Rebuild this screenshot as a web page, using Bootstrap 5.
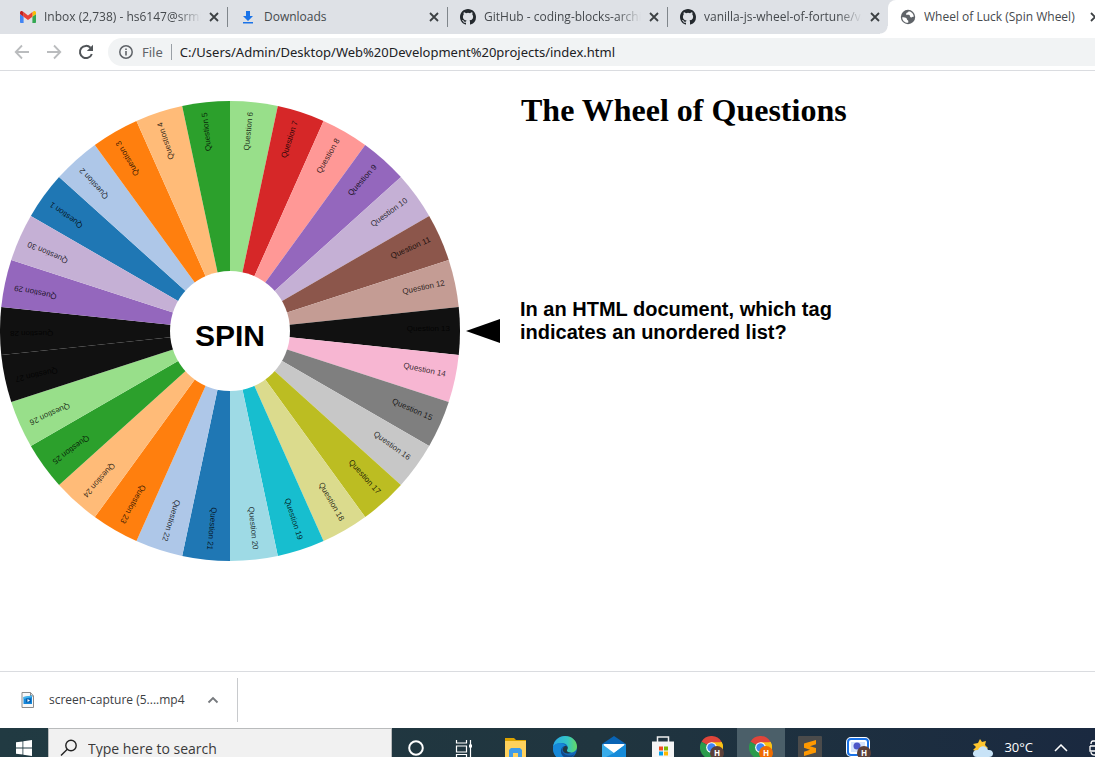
<!DOCTYPE html>
<html lang="en">
<head>
<meta charset="utf-8">
<meta name="viewport" content="width=device-width, initial-scale=1">
<title>Wheel of Luck (Spin Wheel)</title>
<link rel="stylesheet" href="https://cdn.jsdelivr.net/npm/bootstrap@5.3.0/dist/css/bootstrap.min.css">
<style>
  body { font-family: "Open Sans", "Noto Sans", sans-serif; color: #3c4043; background: #fff; }
  button { border: 0; padding: 0; background: none; color: inherit; }
  svg { display: block; flex: none; }

  .tab-strip { background: #dee1e6; height: 34px; padding-left: 8px; }
  .tab { flex: 0 0 220px; min-width: 0; height: 34px; padding: 0 0 0 12px; gap: 8px; position: relative; font-size: 12px; color: #45494d; }
  .tab-title { flex: 1 1 0; overflow: hidden; white-space: nowrap; line-height: 16px; }
  .tab-title.fade-end { -webkit-mask-image: linear-gradient(to right, #000 85%, transparent); mask-image: linear-gradient(to right, #000 85%, transparent); }
  .tab-line { border-right: 1px solid #80868b; height: 20px; }
  .tab-active { background: #fff; border-radius: 8px 0 0 0; }
  .tab-active::before { content: ""; position: absolute; left: -8px; bottom: 0; width: 8px; height: 8px; background: radial-gradient(circle at 0 0, #dee1e6 7px, #fff 8px); }

  .toolbar { height: 37px; padding: 0 0 0 14px; border-bottom: 1px solid #dadce0; }
  .address { background: #f1f3f4; height: 28px; border-radius: 14px 0 0 14px; padding-left: 10px; margin-left: 14px; font: 13px "Noto Sans", sans-serif; gap: 8px; color: #5f6368; }
  .address input { border: 0; background: none; color: #202124; outline: 0; padding: 0; }
  .address-line { width: 1px; height: 16px; background: #9aa0a6; }

  .wheel-page { color: #000; }
  .wheel { margin-top: 30px; }
  .wheel text { font-family: "Liberation Sans", Arial, sans-serif; }
  .wheel .slice-label { font-size: 8px; text-anchor: end; fill-opacity: .8; }
  .wheel .spin-label { font-size: 30px; font-weight: bold; text-anchor: middle; }
  .wheel-heading { font: bold 32px/37px "Liberation Serif", "Times New Roman", serif; margin: 21px 0 0 1px; }
  .question { font: bold 20px/23px "Liberation Sans", Arial, sans-serif; max-width: 340px; margin: 169px 0 0; }

  .shelf { height: 57px; border-top: 1px solid #dadce0; font-size: 12px; }
  .shelf-item { height: 44px; padding: 0 18px 0 21px; gap: 14px; border-right: 1px solid #c8cacd; }

  .taskbar-clip { height: 29px; overflow: hidden; }
  .taskbar { height: 40px; background: linear-gradient(to right, #213a42, #20353f 55%, #1a2940); color: #fff; }
  .task { width: 48px; height: 40px; display: flex; align-items: center; justify-content: center; }
  .task-on { background: #4b5f69; }
  .pinned { gap: 1px; }
  .search-box { width: 344px; height: 40px; background: #f1f1f1; border: 1px solid #b9bbbc; color: #2b2b2b; padding-left: 11px; gap: 10px; }
  .search-box input { border: 0; background: none; outline: 0; padding: 0; font-size: 14px; }
  .search-box input::placeholder { color: #3a3a3a; opacity: 1; }
  .tray { gap: 5px; font-size: 13px; }
</style>
</head>
<body class="d-flex flex-column vh-100 overflow-hidden">

<svg width="0" height="0" class="position-absolute">
  <defs>
    <symbol id="close" viewBox="0 0 10 10"><path d="M1 1l8 8M9 1L1 9" stroke="#3c4043" stroke-width="1.8"/></symbol>
    <symbol id="github" viewBox="0 0 16 16"><path fill="#24292e" d="M8 0C3.58 0 0 3.58 0 8c0 3.54 2.29 6.53 5.47 7.59.4.07.55-.17.55-.38 0-.19-.01-.82-.01-1.49-2.01.37-2.53-.49-2.69-.94-.09-.23-.48-.94-.82-1.13-.28-.15-.68-.52-.01-.53.63-.01 1.08.58 1.23.82.72 1.21 1.87.87 2.33.66.07-.52.28-.87.51-1.07-1.78-.2-3.64-.89-3.64-3.95 0-.87.31-1.59.82-2.15-.08-.2-.36-1.02.08-2.12 0 0 .67-.21 2.2.82a7.6 7.6 0 0 1 4 0c1.53-1.04 2.2-.82 2.2-.82.44 1.1.16 1.92.08 2.12.51.56.82 1.27.82 2.15 0 3.07-1.87 3.75-3.65 3.95.29.25.54.73.54 1.48 0 1.07-.01 1.93-.01 2.2 0 .21.15.46.55.38A8 8 0 0 0 16 8c0-4.42-3.58-8-8-8z"/></symbol>
    <symbol id="chrome" viewBox="0 0 24 24">
      <path d="M12 12L1.6 6A12 12 0 0 1 22.4 6z" fill="#e0453a"/>
      <path d="M12 12L22.4 6A12 12 0 0 1 12 24z" fill="#fbc116"/>
      <path d="M12 12v12A12 12 0 0 1 1.6 6z" fill="#2b9b4c"/>
      <path d="M12 6.4h10.6A12 12 0 0 1 12 24l5-9z" fill="#fbc116"/>
      <circle cx="12" cy="12" r="5.6" fill="#fff"/><circle cx="12" cy="12" r="4.4" fill="#4285f4"/>
    </symbol>
  </defs>
</svg>

<nav class="tab-strip d-flex overflow-hidden flex-shrink-0" aria-label="Tabs">
  <div class="tab d-flex align-items-center">
    <svg width="16" height="12" viewBox="0 0 16 12"><path fill="#4285f4" d="M1.1 12h2.5V5.800L0 3.100v7.800C0 11.500.5 12 1.100 12z"/><path fill="#34a853" d="M12.400 12h2.500c.6 0 1.100-.5 1.100-1.100V3.100l-3.600 2.700z"/><path fill="#fbbc04" d="M12.400 1.100v4.700L16 3.100V1.700c0-1.400-1.500-2.100-2.600-1.300z"/><path fill="#ea4335" d="M3.600 5.800V1.100L8 4.400l4.400-3.300v4.700L8 9.100z"/><path fill="#c5221f" d="M0 1.700v1.400l3.600 2.700V1.100L2.600.4C1.500-.4 0 .3 0 1.700z"/></svg>
    <span class="tab-title fade-end">Inbox (2,738) - hs6147@srmist</span>
    <button aria-label="Close tab"><svg width="10" height="10"><use href="#close"/></svg></button>
    <span class="tab-line"></span>
  </div>
  <div class="tab d-flex align-items-center">
    <svg width="16" height="16" viewBox="0 0 16 16"><path fill="#1a73e8" d="M6 2h4v5h3l-5 5-5-5h3zM3 13h10v1.500H3z"/></svg>
    <span class="tab-title">Downloads</span>
    <button aria-label="Close tab"><svg width="10" height="10"><use href="#close"/></svg></button>
    <span class="tab-line"></span>
  </div>
  <div class="tab d-flex align-items-center">
    <svg width="16" height="16"><use href="#github"/></svg>
    <span class="tab-title fade-end">GitHub - coding-blocks-archives</span>
    <button aria-label="Close tab"><svg width="10" height="10"><use href="#close"/></svg></button>
    <span class="tab-line"></span>
  </div>
  <div class="tab d-flex align-items-center">
    <svg width="16" height="16"><use href="#github"/></svg>
    <span class="tab-title fade-end">vanilla-js-wheel-of-fortune/vanilla</span>
    <button aria-label="Close tab"><svg width="10" height="10"><use href="#close"/></svg></button>
    <span class="tab-line border-0"></span>
  </div>
  <div class="tab tab-active d-flex align-items-center">
    <svg width="16" height="16" viewBox="0 0 16 16"><circle cx="8" cy="8" r="7.200" fill="#5f6368"/><path fill="#fff" d="M2.200 8.200c2 .2 3.500.1 4.300 1.100.6.800.2 1.500 1.200 1.900.8.300.7 1.200.5 2.600C4.500 13.900 2.100 11.200 2.200 8.200zM8.600 2.200c-.1 1-.9 1.300-1.800 1.500-.8.300-.2 1.400-1 1.800 1 .6 2.600-.3 3.600.6 1 1 .3 2 1.600 2.300 1.100.2 1.500-.8 2.800-.6C13.700 4.900 11.600 2.500 8.600 2.200z"/></svg>
    <span class="tab-title">Wheel of Luck (Spin Wheel)</span>
    <button aria-label="Close tab"><svg width="10" height="10"><use href="#close"/></svg></button>
    <span class="tab-line border-0"></span>
  </div>
</nav>

<div class="toolbar d-flex align-items-center flex-shrink-0">
  <button aria-label="Back"><svg width="16" height="16" viewBox="0 0 16 16" fill="none" stroke="#babcbe" stroke-width="1.800"><path d="M15 8H2M8 1.500L1.700 8 8 14.500"/></svg></button>
  <button class="ms-3" aria-label="Forward"><svg width="16" height="16" viewBox="0 0 16 16" fill="none" stroke="#babcbe" stroke-width="1.800"><path d="M1 8h13M8 1.500L14.300 8 8 14.500"/></svg></button>
  <button class="ms-3" aria-label="Reload"><svg width="16" height="16" viewBox="0 0 16 16"><path d="M13.800 10A6.100 6.100 0 1 1 12.500 3.800" fill="none" stroke="#505458" stroke-width="2"/><path d="M15 .8V7H8.800z" fill="#505458"/></svg></button>
  <div class="address d-flex align-items-center flex-grow-1">
    <svg width="16" height="16" viewBox="0 0 16 16"><circle cx="8" cy="8" r="6.200" fill="none" stroke="#5f6368" stroke-width="1.500"/><path d="M7.200 7h1.600v4.500H7.200zM7.200 4.400h1.600V6H7.200z" fill="#5f6368"/></svg>
    <label for="url">File</label>
    <span class="address-line"></span>
    <input id="url" class="flex-grow-1" type="text" value="C:/Users/Admin/Desktop/Web%20Development%20projects/index.html">
  </div>
</div>

<main class="wheel-page d-flex flex-grow-1 overflow-hidden">
  <svg class="wheel" id="wheel" width="520" height="460" viewBox="0 0 520 460">
    <g id="slices" transform="translate(230 230)"></g>
    <circle cx="230" cy="230" r="60" fill="#fff"/>
    <text class="spin-label" x="230" y="245">SPIN</text>
    <path d="M466 230l34-12v24z"/>
  </svg>
  <section>
    <h1 class="wheel-heading">The Wheel of Questions</h1>
    <p class="question">In an HTML document, which tag indicates an unordered list?</p>
  </section>
</main>

<footer class="shelf d-flex align-items-center flex-shrink-0">
  <div class="shelf-item d-flex align-items-center">
    <svg width="14" height="16" viewBox="0 0 14 16"><path d="M1 .5h8.500L12.500 4v11.500H1z" fill="#f8f8f8" stroke="#8b8b8b"/><path d="M9.500.5V4h3" fill="none" stroke="#8b8b8b"/><path d="M2.500 5L11 3.500V12H2.500z" fill="#1687d9"/><path d="M2.500 5L11 3.500V5l-8.500 2z" fill="#45b5ed"/><path d="M5 6.500h5v4H5z" fill="#075fae"/><path d="M6.500 7v3L9 8.500z" fill="#fff"/></svg>
    <span>screen-capture (5....mp4</span>
    <button class="ms-2" aria-label="Download options"><svg width="12" height="8" viewBox="0 0 12 8"><path d="M1.500 6.500L6 2l4.500 4.500" fill="none" stroke="#76797d" stroke-width="1.800"/></svg></button>
  </div>
</footer>

<div class="taskbar-clip flex-shrink-0">
  <div class="taskbar d-flex align-items-center">
    <button class="task" aria-label="Start"><svg width="16" height="16" viewBox="0 0 16 16" fill="#fff"><path d="M0 2.300l6.500-.9v6.200H0zM7.300 1.300L16 0v7.600H7.300zM0 8.400h6.500v6.200L0 13.700zM7.300 8.400H16V16l-8.700-1.200z"/></svg></button>
    <label class="search-box d-flex align-items-center">
      <svg width="18" height="18" viewBox="0 0 18 18" fill="none" stroke="#222" stroke-width="1.400"><circle cx="11" cy="6.500" r="5.200"/><path d="M7.300 10.200L1 16.500"/></svg>
      <input type="text" placeholder="Type here to search" aria-label="Type here to search">
    </label>
    <button class="task" aria-label="Cortana"><svg width="18" height="18" viewBox="0 0 18 18"><circle cx="9" cy="9" r="6.800" fill="none" stroke="#fff" stroke-width="2"/></svg></button>
    <button class="task" aria-label="Task view"><svg width="18" height="18" viewBox="0 0 18 18" fill="none" stroke="#fff" stroke-width="1.200"><path d="M1.500 1v3h10V1M1.500 7h10v6h-10zM1.500 18v-2.500h10V18M15.500 1v17"/><path d="M14 5.500h3v3h-3z" fill="#fff" stroke="none"/></svg></button>
    <div class="pinned d-flex ms-1">
      <button class="task" aria-label="File Explorer"><svg width="24" height="20" viewBox="0 0 24 20"><path d="M1 0h9l2 2h10v4H1z" fill="#dda300"/><path d="M1 3h21v16H1z" fill="#ffd15c"/><path d="M5 19v-7l2-2h9l2 2v7h-4v-4H9v4z" fill="#3f9be8"/></svg></button>
      <button class="task" aria-label="Edge"><svg width="24" height="24" viewBox="0 0 24 24"><defs><linearGradient id="edgeTop"><stop offset="0" stop-color="#2aa9e5"/><stop offset=".6" stop-color="#35c6c4"/><stop offset="1" stop-color="#65da62"/></linearGradient></defs><circle cx="12" cy="12" r="12" fill="#1268b9"/><path d="M0 11C1 4 6 0 12 0c7 0 12 5 12 10.500 0 4-3 6-6.500 6-3 0-4-1.500-3.500-2.500C16 11 14 7 9 7c-4 0-8 2-9 4z" fill="url(#edgeTop)"/><path d="M0 11c2-5 11-5 12.500-1C9 10 7.500 13 8 16c1 4 4 7 8 7C7 27-1 20 0 11z" fill="#1688d8"/><path d="M12.500 10C9 10 8 13 9.500 16c2 3 7 5 12 2-3 6-11 5-13 0-1.500-4 0-7 4-8z" fill="#114a8b"/><path d="M14 14c2-4-1-4-2-4-2 1-3 3-2 5 2 3 6 3 8 1.500-2 0-4.500-.5-4-2.500z" fill="#213943"/></svg></button>
      <button class="task" aria-label="Mail"><svg width="24" height="24" viewBox="0 0 24 24"><path d="M0 8L12 0l12 8v3H0z" fill="#0964b5"/><path d="M1.500 8h21v10h-21z" fill="#fff"/><path d="M0 8l12 9 12-9v15H0z" fill="#38acea"/><path d="M12 17L24 8v15H0z" fill="#168bd9"/></svg></button>
      <button class="task" aria-label="Microsoft Store"><svg width="24" height="24" viewBox="0 0 24 24"><path d="M6.500 7V1h11v6" fill="none" stroke="#eee" stroke-width="1.500"/><path d="M1 5.500h22V24H1z" fill="#f5f5f5"/><path d="M8 10.500h4v4H8z" fill="#f04e23"/><path d="M13 10.500h4v4h-4z" fill="#7fb900"/><path d="M8 15.500h4v4H8z" fill="#00a3ee"/><path d="M13 15.500h4v4h-4z" fill="#ffb900"/></svg></button>
      <button class="task" aria-label="Chrome"><svg width="24" height="24" viewBox="0 0 24 24"><use href="#chrome" width="23" height="23"/><circle cx="17" cy="17" r="7" fill="#5b4039"/><text x="17" y="20" fill="#fff" font-size="8" font-weight="bold" text-anchor="middle">H</text></svg></button>
      <button class="task task-on" aria-label="Chrome, open"><svg width="24" height="24" viewBox="0 0 24 24"><use href="#chrome" width="23" height="23"/><circle cx="17" cy="17" r="7" fill="#ef6c00"/><text x="17" y="20" fill="#fff" font-size="8" font-weight="bold" text-anchor="middle">H</text></svg></button>
      <button class="task" aria-label="Sublime Text"><svg width="24" height="24" viewBox="0 0 24 24"><rect width="24" height="24" rx="1" fill="#4b4b4b"/><path d="M6 7.500L18 4v4.300l-6 1.900 6 1.900v4.300L6 20v-4.200l6-2-6-2z" fill="#ff9800"/></svg></button>
      <button class="task" aria-label="Screen recorder"><svg width="26" height="22" viewBox="0 0 26 22"><rect x="1" y="1" width="22" height="18" rx="4" fill="#fff" stroke="#fff" stroke-width="2"/><rect x="2" y="2" width="20" height="16" rx="3" fill="#fff" stroke="#1a73e8" stroke-width="2"/><rect x="5" y="5" width="14" height="10" fill="#d4e3fc"/><circle cx="11" cy="9" r="3.500" fill="#4c56c8"/><circle cx="18" cy="16" r="7" fill="#5b4039"/><text x="18" y="19" fill="#fff" font-size="8" font-weight="bold" text-anchor="middle">H</text></svg></button>
    </div>
    <div class="tray d-flex align-items-center ms-auto">
      <svg width="24" height="22" viewBox="0 0 24 22"><path d="M9 2l2 3 4-1-1 4 3 3-5 4-7-1-3-1 3-3-3-3 5-1z" fill="#ffc52e"/><path d="M6 20c-6 0-5-8 1-7 2-5 8-5 10 0 6-1 7 7 1 7z" fill="#c8e3f7"/></svg>
      <span class="ms-1">30°C</span>
      <button class="ms-3" aria-label="Show hidden icons"><svg width="14" height="8" viewBox="0 0 14 8"><path d="M1 7l6-6 6 6" fill="none" stroke="#fff" stroke-width="1.500"/></svg></button>
      <svg class="ms-3" width="6" height="16" viewBox="0 0 6 16"><path d="M6 1H4Q2 1 2 4M1 6h5M1 6v5h5M2 12q0 3 4 3" fill="none" stroke="#fff" stroke-width="1.300"/></svg>
    </div>
  </div>
</div>

<script src="https://cdn.jsdelivr.net/npm/bootstrap@5.3.0/dist/js/bootstrap.bundle.min.js"></script>
<script>
  // Two-tone category palette; questions that were already asked turn dark.
  const palette = ["#1f77b4","#aec7e8","#ff7f0e","#ffbb78","#2ca02c","#98df8a","#d62728","#ff9896","#9467bd","#c5b0d5",
                   "#8c564b","#c49c94","#e377c2","#f7b6d2","#7f7f7f","#c7c7c7","#bcbd22","#dbdb8d","#17becf","#9edae5"];
  const asked = [13, 27, 28], current = 13, total = 30, radius = 230;
  const half = Math.PI / total, x = radius * Math.cos(half), y = radius * Math.sin(half);
  let markup = "";
  for (let n = 1; n <= total; n++) {
    const fill = asked.includes(n) ? "#111" : palette[(n - 1) % palette.length];
    markup += `<g transform="rotate(${(n - current) * 360 / total})">` +
      `<path d="M0 0L${x} ${-y}A${radius} ${radius} 0 0 1 ${x} ${y}Z" fill="${fill}"/>` +
      `<text class="slice-label" x="220" y="0">Question ${n}</text></g>`;
  }
  document.getElementById("slices").innerHTML = markup;
</script>
</body>
</html>
